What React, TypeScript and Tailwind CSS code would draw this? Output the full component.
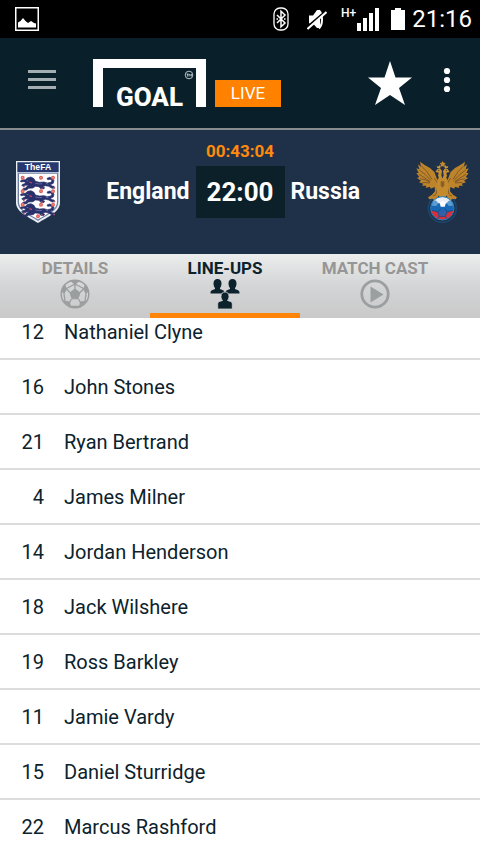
import type { ReactNode } from 'react'

const PLAYERS = [
  { num: 12, name: 'Nathaniel Clyne' },
  { num: 16, name: 'John Stones' },
  { num: 21, name: 'Ryan Bertrand' },
  { num: 4, name: 'James Milner' },
  { num: 14, name: 'Jordan Henderson' },
  { num: 18, name: 'Jack Wilshere' },
  { num: 19, name: 'Ross Barkley' },
  { num: 11, name: 'Jamie Vardy' },
  { num: 15, name: 'Daniel Sturridge' },
  { num: 22, name: 'Marcus Rashford' },
] as const

function StatusBar() {
  return (
    <div className="flex h-[38px] items-center bg-black pr-2 pl-[15px] text-white">
      <svg className="size-6" viewBox="0 0 24 24" fill="none">
        <rect x="0.75" y="0.75" width="22.5" height="22.5" stroke="currentColor" strokeWidth="1.5" />
        <path d="M3 20.5v-5l2.500-1.500L8 11l2.500 3 2.500 2 3-2 3 2 2 .5v4z" fill="currentColor" />
      </svg>
      <div className="ml-auto flex items-center">
        <svg className="h-6 w-4" viewBox="0 0 16 24" fill="none" stroke="currentColor">
          <rect x="1" y="1" width="14" height="22" rx="6" strokeWidth="1.300" />
          <path d="M4 8l8 8-4 3.800V4.200L12 8l-8 8" strokeWidth="1.500" />
          <path d="M3.500 12h1.500M11 12h1.500" strokeWidth="1.500" />
        </svg>
        <svg className="ml-[18px] h-6 w-5" viewBox="0 0 20 24" fill="none">
          <path d="M2 8.500h4l4-5.500h3v18h-3l-4-4.500H2z" fill="currentColor" />
          <path d="M12 3.500c4 4 4 14 0 18" stroke="currentColor" strokeWidth="2" />
          <path d="M0 20L20 3" stroke="#000" strokeWidth="1.800" />
          <path d="M0.500 22L19.500 5" stroke="currentColor" strokeWidth="2" />
        </svg>
        <span className="mb-3 ml-3.5 font-['Roboto'] text-xs leading-3 font-medium">H+</span>
        <svg className="h-6 w-6" viewBox="0 0 24 24" fill="currentColor">
          <path d="M1 16h4v8H1zM7 11h4v13H7zM13 6h4v18h-4zM19 1h4v23h-4z" />
        </svg>
        <svg className="ml-2.5 h-6 w-4" viewBox="0 0 16 24" fill="currentColor">
          <path d="M1 3h4V1h6v2h4v20H1z" />
        </svg>
        <span className="ml-1.5 text-2xl leading-6">21:16</span>
      </div>
    </div>
  )
}

function Header() {
  return (
    <header className="flex h-[92px] items-center border-b-2 border-[#868b8d] bg-[#09202b] pr-5 pl-7">
      <button aria-label="Menu">
        <svg className="h-8 w-7" viewBox="0 0 28 32" fill="#a3adb2">
          <path d="M0 3h28v3H0zM0 11h28v3H0zM0 19h28v3H0z" />
        </svg>
      </button>
      <a href="#" className="ml-[37px] flex items-end">
        <span className="relative flex h-12 w-[113px] items-end justify-center border-x-10 border-t-9 border-white">
          <span className="text-[26px] leading-5 font-extrabold text-white">GOAL</span>
          <svg className="absolute top-0.5 right-0.5 size-2.5" viewBox="0 0 10 10" fill="none" stroke="#c9d0d3">
            <circle cx="5" cy="5" r="3.800" strokeWidth="0.900" />
            <path d="M2.500 4h2M3.500 4v2.500M5 6.500V4l1.200 1.500L7.400 4v2.500" strokeWidth="0.800" />
          </svg>
        </span>
        <span className="ml-[9px] flex h-[27px] w-[66px] items-center justify-center bg-[#ff8100] text-[17px] text-white">
          LIVE
        </span>
      </a>
      <button aria-label="Add to favourites" className="ml-auto">
        <svg className="size-11" viewBox="0 0 44 44" fill="#fff">
          <path d="M22 0l5.500 16.500H44L31 27l6 17-15-10L7 44l6-17L0 16.500h16.500z" />
        </svg>
      </button>
      <button aria-label="More options" className="ml-7">
        <svg className="h-8 w-5" viewBox="0 0 20 32" fill="#fff">
          <circle cx="7" cy="4" r="3.100" />
          <circle cx="7" cy="13" r="3.100" />
          <circle cx="7" cy="22" r="3.100" />
        </svg>
      </button>
    </header>
  )
}

function Lion({ y }: { y: number }) {
  return (
    <g transform={`translate(0 ${y})`}>
      <path
        d="M28 10l7-6 10-2 9 5 4 8 12 3 14-1 10 3 10-2 4-5-5-4-8 1-2-4 8-3 9 3 4 7-2 8-9 4 5 4 6 1 3 5-9 1-10-6-10-2-8 3 6 3-3 4-9-1-5-6-11-1-7 5-13 1-6 5-8 1-5-3 4-3 6-1 4-5 6-4-10 1-7 3-5-3 3-3 6-2 3-4-6-2-8 1-2-3 4-3z"
        fill="#28316b"
        stroke="#28316b"
        strokeWidth="2"
      />
      <path d="M58 21l12 2 8-1M90 21l7 3M32 13l5 1" fill="none" stroke="#8088ad" strokeWidth="2" />
      <path d="M40 17l8 3M21 31l5-1M75 36l5 0M112 34l5 1" stroke="#c2485c" strokeWidth="4" />
    </g>
  )
}

function EnglandCrest() {
  return (
    <svg className="h-[62px] w-11" viewBox="0 0 132 186" role="img" aria-label="England crest">
      <path d="M0 0h132v125c0 28-38 43-66 61C38 168 0 153 0 125z" fill="#e9edf4" />
      <path d="M5 36h122v88c0 25-35 39-61 56C40 163 5 149 5 124z" fill="#6f7f9f" />
      <path d="M9 38h114v85c0 24-32 37-57 52C41 160 9 147 9 123z" fill="#fff" />
      <path d="M4 4h124v30H4z" fill="#26386e" />
      <text
        x="66"
        y="27"
        textAnchor="middle"
        className="font-['Liberation_Sans'] text-[26px] font-bold"
        fill="#fff"
      >
        TheFA
      </text>
      <Lion y={46} />
      <Lion y={87} />
      <Lion y={126} />
      {[49, 90, 130].map((y) => (
        <g key={y} fill="#f3a29c" stroke="#e0625c" strokeWidth="4">
          <circle cx="20" cy={y + 1} r="4" />
          <circle cx="75" cy={y + 1} r="4" />
          <circle cx="111" cy={y + 1} r="4" />
        </g>
      ))}
      <circle cx="66" cy="166" r="4" fill="#f3a29c" stroke="#e0625c" strokeWidth="4" />
    </svg>
  )
}

function RussiaCrest() {
  const wing = (
    <>
      <path
        d="M103 98l-8-14-7-18-13-12-16-9-14-10 3 15-9-7 4 15-9-3 7 14-7 0 9 12-7 3 12 8-6 5 13 4-4 6 13 0-2 7 13-4 2 6 12-5 1 13-9 10-12 8 4 6 10-2 6 6 8-7 4-12h8V94z"
        fill="#bd8429"
      />
      <path
        d="M49 48l16 16 16 24M43 60l17 13 18 18M42 73l15 9 19 13M45 86l15 3 15 7M53 97l22 2M88 84l11 17M98 112l-5 20M84 138l9-4"
        fill="none"
        stroke="#75502b"
        strokeWidth="2.500"
      />
      <path d="M105 92l-6-15 2-9-10-2 6-9 8-2 6 8-2 13 4 12z" fill="#c88e30" />
      <circle cx="101" cy="61" r="1.800" fill="#4f3b2b" />
      <path d="M97 54l-2-7 5 3 3-5 4 7-3 3z" fill="#d19a37" />
    </>
  )
  return (
    <svg className="h-[62px] w-[53px]" viewBox="33 33 159 186" role="img" aria-label="Russia crest">
      <circle cx="112" cy="175" r="42" fill="none" stroke="#1c456b" strokeWidth="5" />
      {wing}
      <g transform="translate(225 0) scale(-1 1)">{wing}</g>
      <path
        d="M112 33l4 5 6 1-4 5 3 6-8-1-8 1 3-6-4-5 6-1zM100 84h25l6 24-4 26-8 10h-13l-8-10-4-26z"
        fill="#c38b2d"
      />
      <path d="M107 94h11v13l-6 6-5-6z" fill="#8b5f29" />
      <clipPath id="ball">
        <circle cx="112" cy="175" r="35" />
      </clipPath>
      <g clipPath="url(#ball)">
        <path d="M76 139h74v24H76z" fill="#e7eef6" />
        <path d="M76 160h74v24H76z" fill="#1769b5" />
        <path d="M76 183h74v28H76z" fill="#d92f3b" />
        <path d="M82 157l10-6 8 8-6 9-13-1zM143 157l-10-6-8 8 6 9 13-1z" fill="#5a9bd2" />
        <path d="M104 158l9-5 10 5-4 12h-12z" fill="#fff" />
        <path
          d="M107 176l-8 10 4 13 18 0 5-13-7-10M99 186l-17-5M126 186l17-5M103 199l-7 9M121 199l7 9"
          fill="none"
          stroke="#134d8d"
          strokeWidth="3"
        />
        <path d="M101 186l11-7 12 7-4 11h-15z" fill="#2a62ab" />
      </g>
      <circle cx="112" cy="175" r="35" fill="none" stroke="#2380c4" strokeWidth="3" />
    </svg>
  )
}

function Scoreboard() {
  return (
    <section className="bg-[#1f3149] pt-[11px] pb-[31px] font-bold text-white">
      <p className="text-center text-[17px] leading-5 text-[#ff8a0c]">00:43:04</p>
      <div className="flex items-center">
        <div className="flex w-[75px] justify-center">
          <EnglandCrest />
        </div>
        <div className="grid flex-1 grid-cols-[1fr_auto_1fr] items-center gap-1.5 text-[23px]">
          <span className="text-right">England</span>
          <span className="flex h-[52px] w-[89px] items-center justify-center bg-[#0c2029] text-[26px]">22:00</span>
          <span>Russia</span>
        </div>
        <div className="flex w-[75px] justify-center">
          <RussiaCrest />
        </div>
      </div>
    </section>
  )
}

function BallIcon() {
  return (
    <svg className="size-[30px]" viewBox="0 0 30 30" fill="none" stroke="#9b9e9f">
      <circle cx="15" cy="15" r="13.800" strokeWidth="1.500" />
      <path d="M15 10l5 3.800-2 6h-6l-2-6z" fill="#9b9e9f" />
      <path
        d="M10.500 1.800h9L15 5.200zM1.500 12l3-6.500 2 4.500-2.500 4.500zM28.500 12l-3-6.500-2 4.500 2.500 4.500zM4.500 22.500l5 .5 1 5zM25.500 22.500l-5 .5-1 5z"
        fill="#9b9e9f"
      />
      <path
        d="M15 5v5M6.500 10l3.500 3.500M23.500 10L20 13.500M11.500 20l-2 3.500M18.500 20l2 3.500M4 14.500l1 8M26 14.500l-1 8M15 5L6.500 9.500M15 5l8.500 4.500M10.500 27.500h9"
        strokeWidth="1.300"
      />
    </svg>
  )
}

function TeamIcon() {
  // bust in a 14x15 box: head, neck, shoulders
  const bust = 'M3 4.500C3 1.500 4.500 0 7 0s4 1.500 4 4.500c0 2-.8 3.500-1.500 4.500v1l3 1.200c1.200.5 1.500 1.300 1.500 3.300H0c0-2 .3-2.800 1.500-3.300l3-1.200V9C3.800 8 3 6.500 3 4.500z'
  return (
    <svg className="size-[30px]" viewBox="0 0 30 30" fill="#0c222c">
      <path d={bust} transform="translate(0.500 0)" />
      <path d={bust} transform="translate(15.500 0)" />
      <path
        d="M11 17.500c0-3 1.500-4.500 4-4.500s4 1.500 4 4.500c0 2-.8 3-1.500 4l3 1c1.300.5 1.800 1.300 1.800 3V30H7.700v-4.500c0-1.700.5-2.500 1.800-3l3-1c-.7-1-1.500-2-1.500-4z"
        stroke="#d6d8d8"
        strokeWidth="0.800"
      />
    </svg>
  )
}

function PlayIcon() {
  return (
    <svg className="size-[30px]" viewBox="0 0 30 30" fill="none">
      <circle cx="15" cy="15" r="13.200" stroke="#9b9fa0" strokeWidth="2.800" />
      <path d="M10.500 7.500v16L23.500 15.500z" fill="#9b9fa0" />
    </svg>
  )
}

function Tab({ label, icon, active = false }: { label: string; icon: ReactNode; active?: boolean }) {
  return (
    <button
      role="tab"
      aria-selected={active}
      className={`flex w-[150px] shrink-0 flex-col items-center border-b-5 pt-1 ${
        active ? 'border-[#ff8407] text-[#0c222c]' : 'border-transparent text-[#969696]'
      }`}
    >
      <span className="text-[17px] leading-[21px] font-bold">{label}</span>
      {icon}
    </button>
  )
}

export default function App() {
  return (
    <div className="bg-white font-['Roboto',sans-serif] text-[#0c222c]">
      <StatusBar />
      <Header />
      <main>
        <Scoreboard />
        <div role="tablist" className="flex h-16 bg-linear-to-b from-[#eceded] via-[#d3d5d6] to-[#c9c9c9]">
          <Tab label="DETAILS" icon={<BallIcon />} />
          <Tab label="LINE-UPS" icon={<TeamIcon />} active />
          <Tab label="MATCH CAST" icon={<PlayIcon />} />
        </div>
        {/* list is scrolled part way through the first row */}
        <div className="overflow-hidden">
          <table className="-mt-[13px] w-full border-separate border-spacing-0 text-xl" aria-label="England line-up">
            <tbody className="[&>tr:last-child>td]:border-transparent">
              {PLAYERS.map(({ num, name }) => (
                <tr key={num}>
                  <td className="h-[55px] w-11 border-b-2 border-[#dcdcdc] p-0 text-right">{num}</td>
                  <td className="h-[55px] border-b-2 border-[#dcdcdc] p-0 pl-5">{name}</td>
                </tr>
              ))}
            </tbody>
          </table>
        </div>
      </main>
    </div>
  )
}
